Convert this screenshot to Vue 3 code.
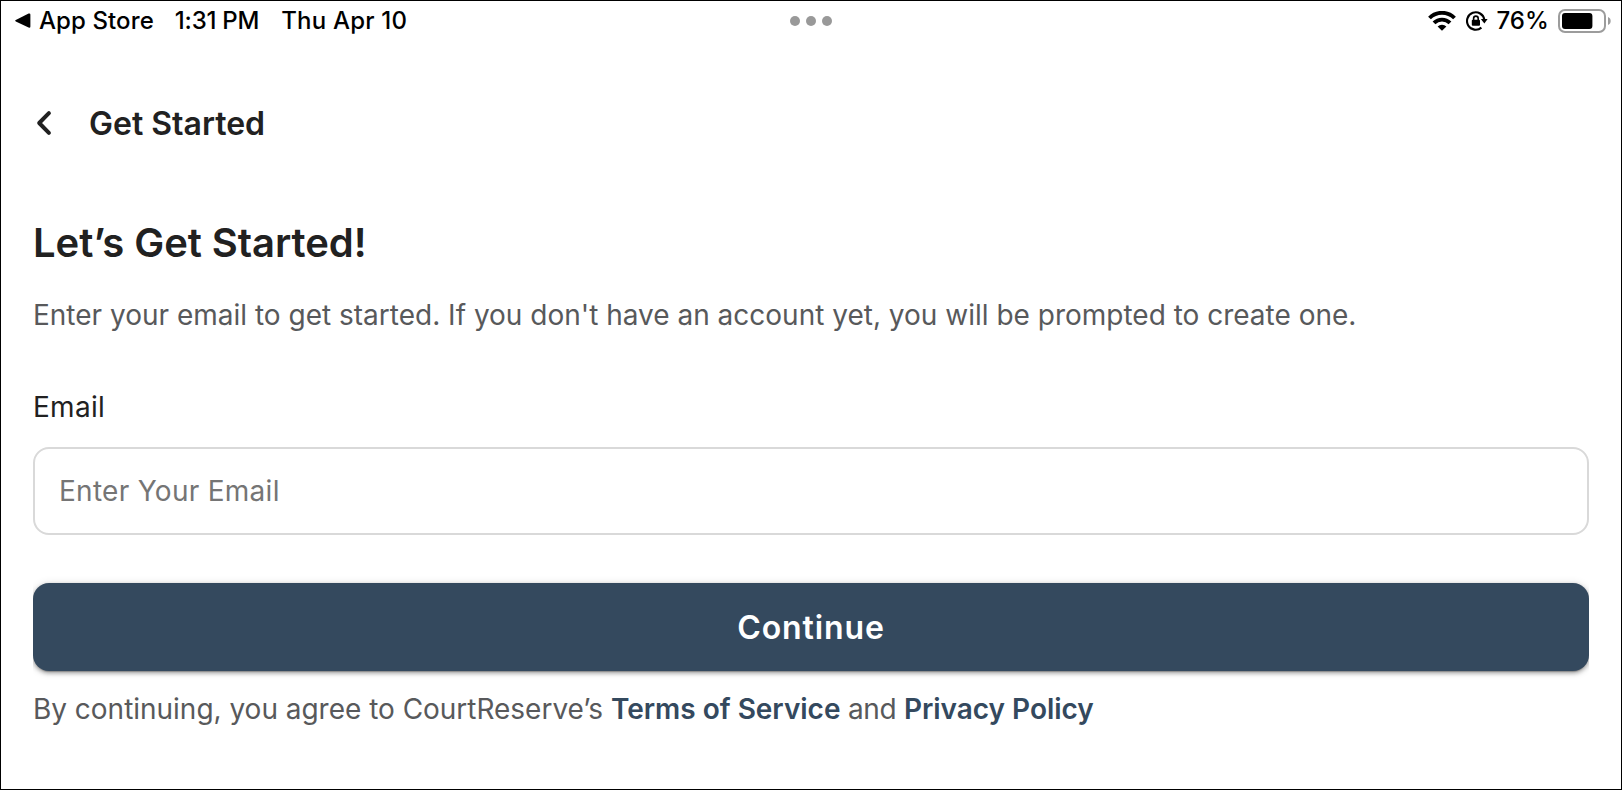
<template>
  <div class="screen">
    <!-- Status bar -->
    <div class="status-bar">
      <div class="status-left">
        <svg class="back-app" viewBox="0 0 16 16" fill="currentColor">
          <path d="M0.8 7 L13.6 0.6 Q15.4 0 15.4 1.8 V13.4 Q15.4 15.2 13.6 14.6 L0.8 8.4 Q-0.4 7.7 0.8 7z" />
        </svg>
        <span class="app-name">App Store</span>
        <span class="time">1:31<span class="period">PM</span></span>
        <span class="date">Thu Apr 10</span>
      </div>
      <div class="dots">
        <span v-for="n in 3" :key="n" class="dot"></span>
      </div>
      <div class="status-right">
        <svg class="wifi" viewBox="0 0 28 20">
          <g fill="none" stroke="currentColor" stroke-width="3.9">
            <path d="M1.5 7 A17.6 17.6 0 0 1 26.5 7" />
            <path d="M6 11.9 A11.3 11.3 0 0 1 22 11.9" />
          </g>
          <path d="M14 19.8 L9.6 15.5 A6.6 6.6 0 0 1 18.4 15.5z" fill="currentColor" />
        </svg>
        <svg class="lock" viewBox="0 0 22 20">
          <path d="M15.4 16.6 A8.7 8.7 0 1 1 18.3 8.6" fill="none" stroke="currentColor" stroke-width="2.1" />
          <path d="M14.8 7.9 H21.6 L18.4 12.5z" fill="currentColor" />
          <rect x="5.8" y="8.8" width="8.2" height="6" rx="1" fill="currentColor" />
          <path d="M7.6 9.2 V7.4 A2.3 2.3 0 0 1 12.2 7.4 V9.2" fill="none" stroke="currentColor" stroke-width="1.6" />
        </svg>
        <span class="percent">{{ battery }}%</span>
        <svg class="battery" viewBox="0 0 53 24">
          <rect x="1" y="1" width="46" height="22" rx="6" fill="none" stroke="#9c9c9c" stroke-width="2" />
          <rect x="4" y="4" :width="battery * 0.4" height="16" rx="3" fill="currentColor" />
          <path d="M50 8 C53.6 9.2 53.6 14.8 50 16z" fill="#9c9c9c" />
        </svg>
      </div>
    </div>

    <!-- Navigation -->
    <header class="nav">
      <button class="back" type="button" aria-label="Back">
        <svg viewBox="0 0 16 26" fill="none" stroke="currentColor" stroke-width="4" stroke-linecap="round" stroke-linejoin="round">
          <path d="M12.9 3.1 L3.2 13 L12.9 22.9" />
        </svg>
      </button>
      <span class="nav-title">Get Started</span>
    </header>

    <!-- Form -->
    <form class="content" @submit.prevent>
      <h1 class="title">Let’s Get Started!</h1>
      <p class="desc">Enter your email to get started. If you don't have an account yet, you will be prompted to create one.</p>
      <label class="label" for="email">Email</label>
      <input id="email" v-model="email" class="input" type="email" placeholder="Enter Your Email" />
      <div class="submit-wrap">
        <button class="submit" type="submit">Continue</button>
      </div>
      <p class="terms">
        By continuing, you agree to CourtReserve’s <a class="link">Terms of Service</a><span class="and"> and </span><a class="link">Privacy Policy</a>
      </p>
    </form>
  </div>
</template>

<script setup>
import { ref } from 'vue'

const email = ref('')
const battery = ref(76)
</script>

<style>
body {
  margin: 0;
  background: #fff;
}
</style>

<style scoped>
.screen {
  box-sizing: border-box;
  width: 100%;
  height: 100vh;
  border: 1px solid #000;
  background: #fff;
  color: #212121;
  font-family: Inter, "Liberation Sans", sans-serif;
  overflow: hidden;
}

.status-bar {
  display: grid;
  grid-template-columns: 1fr auto 1fr;
  align-items: center;
  height: 40px;
  padding: 0 10px;
  color: #000;
  font-size: 24px;
  font-weight: 500;
  line-height: 40px;
}

.status-left,
.status-right {
  display: flex;
  align-items: center;
  white-space: pre;
}

.status-right {
  justify-content: flex-end;
}

.back-app {
  width: 16px;
  height: 16px;
  margin: 0 8px 0 4px;
}

.app-name {
  letter-spacing: 0.1px;
}

.time {
  margin-left: 21px;
  letter-spacing: -0.2px;
}

.period {
  margin-left: 6px;
}

.date {
  margin-left: 22px;
  letter-spacing: 0.2px;
}

.dots {
  display: flex;
  gap: 6px;
}

.dot {
  width: 10px;
  height: 10px;
  border-radius: 50%;
  background: #999;
}

.wifi {
  width: 28px;
  height: 20px;
  margin-right: 10px;
}

.lock {
  width: 22px;
  height: 20px;
  margin-right: 8px;
}

.percent {
  margin-right: 9px;
  letter-spacing: 0.1px;
}

.battery {
  width: 53px;
  height: 24px;
}

.nav {
  display: flex;
  align-items: center;
  height: 80px;
  margin-top: 42px;
  padding: 0 32px 0 35px;
}

.back {
  display: flex;
  width: 16px;
  height: 26px;
  margin-right: 37px;
  padding: 0;
  border: 0;
  background: none;
  color: #212121;
}

.back svg {
  width: 16px;
  height: 26px;
}

.nav-title {
  padding-top: 1px;
  font-size: 32px;
  font-weight: 600;
}

.content {
  display: flex;
  flex-direction: column;
  padding: 56px 32px 0;
}

.title {
  margin: 0 0 28px;
  font-size: 40px;
  font-weight: 600;
  line-height: 48px;
  letter-spacing: -0.06px;
}

.desc {
  margin: 0 0 52px;
  color: #58595b;
  font-size: 28px;
  line-height: 40px;
}

.label {
  margin-bottom: 20px;
  font-size: 28px;
  line-height: 40px;
  letter-spacing: 0.28px;
}

.input {
  box-sizing: border-box;
  width: 100%;
  height: 88px;
  padding: 0 24px;
  border: 2px solid #d9d9d9;
  border-radius: 16px;
  outline: none;
  background: #fff;
  color: #212121;
  font-family: inherit;
  font-size: 28px;
  letter-spacing: 0.28px;
}

.input::placeholder {
  color: #757575;
  opacity: 1;
}

/* keeps the button shadow inside the column */
.submit-wrap {
  margin-top: 40px;
  padding: 8px 0 18px;
  overflow: hidden;
}

.submit {
  display: block;
  width: 100%;
  height: 88px;
  padding: 0;
  border: 0;
  border-radius: 16px;
  background: #34495e;
  box-shadow: 0 3px 1px -2px rgba(0, 0, 0, 0.2), 0 2px 4px rgba(0, 0, 0, 0.35), 0 1px 10px rgba(0, 0, 0, 0.12);
  color: #fff;
  font-family: inherit;
  font-size: 32px;
  font-weight: 600;
  letter-spacing: 0.9px;
}

.terms {
  margin: 0;
  color: #58595b;
  font-size: 28px;
  line-height: 40px;
  letter-spacing: -0.02px;
}

.and {
  letter-spacing: -0.35px;
}

.link {
  color: #34495e;
  font-weight: 600;
  letter-spacing: -0.02px;
}
</style>
